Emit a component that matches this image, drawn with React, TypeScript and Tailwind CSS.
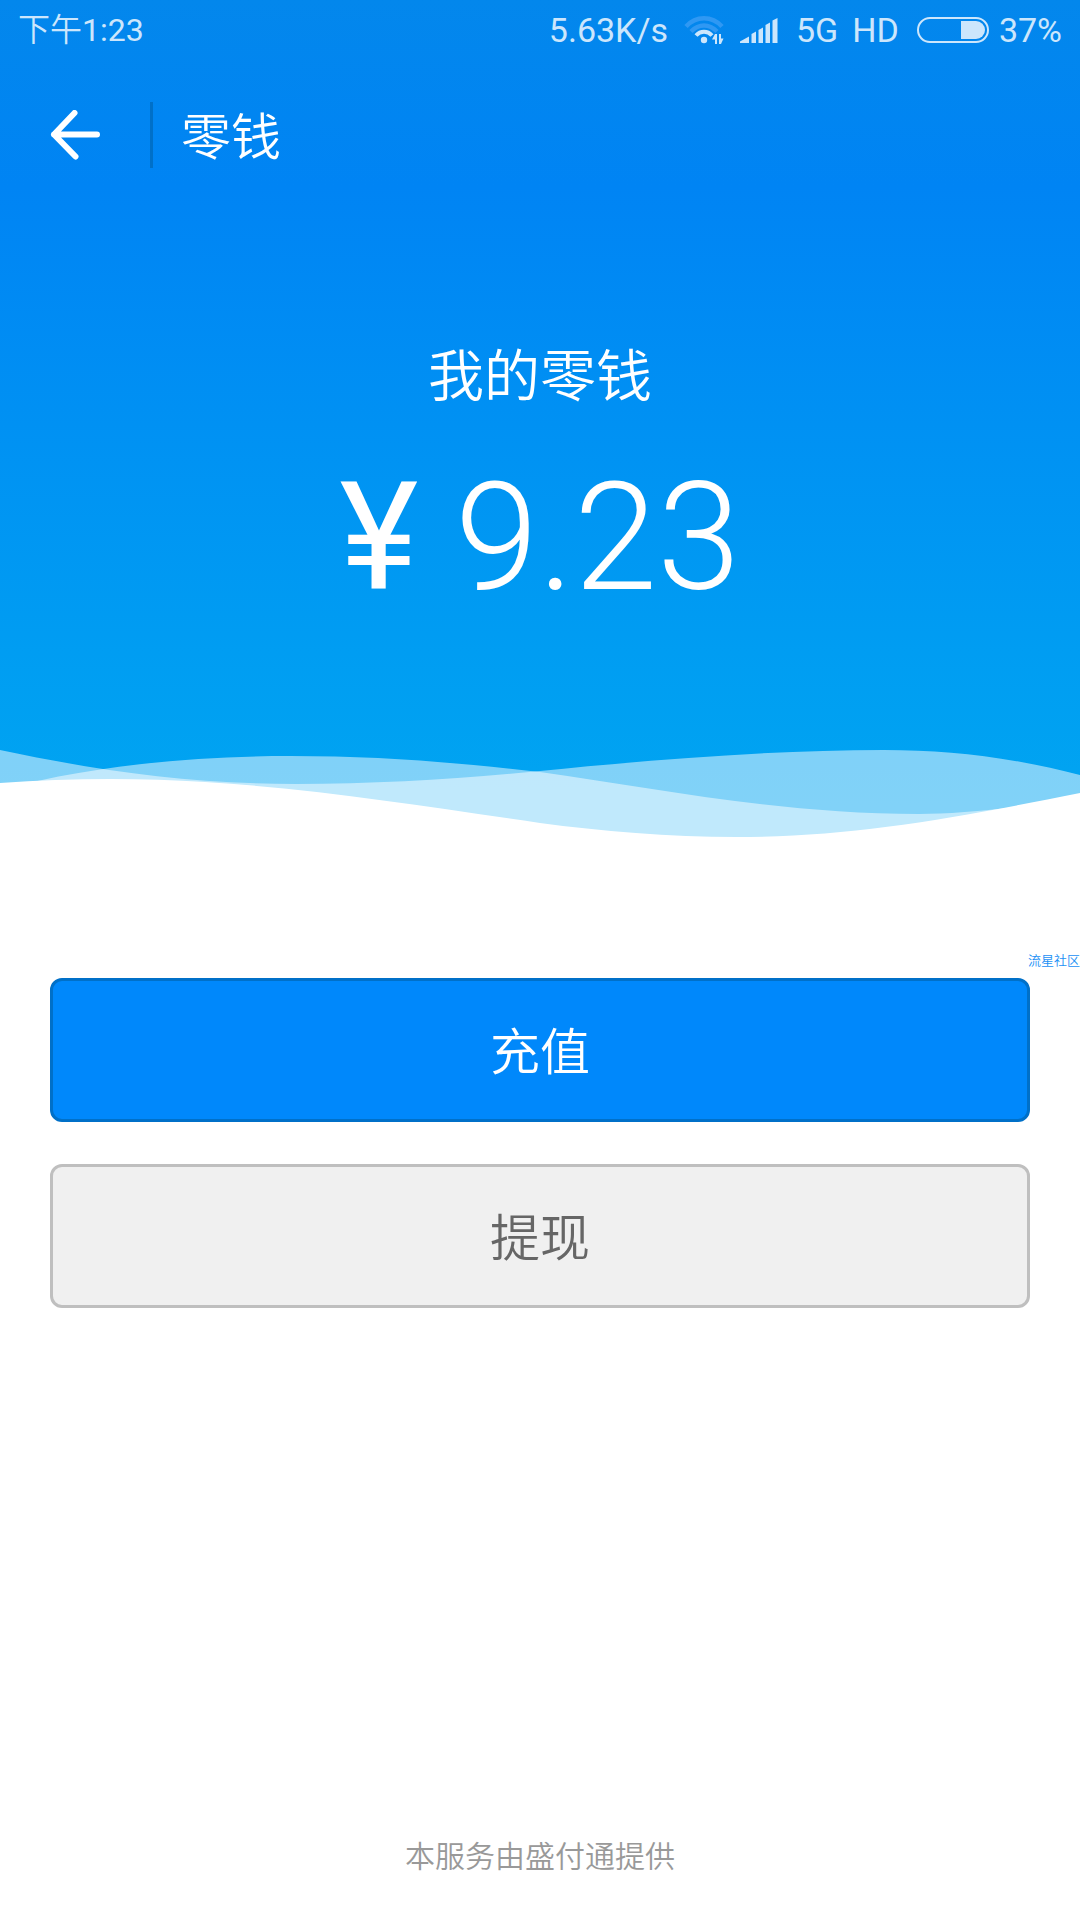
const WifiIcon = () => (
  <svg viewBox="0 0 40 29" className="w-10 h-[29px]" fill="none" aria-hidden="true">
    <path d="M2 10.500C12 -0.500 28 -0.500 38 10.500" stroke="#2f98f3" strokeWidth="4.500" />
    <path d="M7 15.500C15 7.500 25 7.500 33 15.500" stroke="#2f98f3" strokeWidth="4.500" />
    <path d="M12 19.500C16.500 14.500 23.500 14.500 28 19.500" stroke="#cce6fc" strokeWidth="4" />
    <circle cx="20" cy="24" r="3.200" fill="#cce6fc" />
    <path d="M28 23.500L31 18H33V28H31V23.500ZM39.500 22.500L37 28H35V18H37V22.500Z" fill="#cce6fc" />
  </svg>
);

const SignalIcon = () => (
  <svg viewBox="0 0 38 25" className="w-[38px] h-[25px]" fill="#cce6fc" aria-hidden="true">
    <path d="M0 25V23.500L9 18.500V25Z" />
    <path d="M11.500 25V16L16 13.500V25Z" />
    <path d="M18.500 25V12L23 9.500V25Z" />
    <path d="M25.500 25V7L30 4.500V25Z" />
    <path d="M32.500 25V2.500L37.500 0V25Z" />
  </svg>
);

const BatteryIcon = () => (
  <svg viewBox="0 0 72 26" className="w-[72px] h-[26px]" fill="none" aria-hidden="true">
    <rect x="1" y="1" width="70" height="24" rx="12" stroke="#cce6fc" strokeWidth="2" />
    <path d="M44 4H59A9 9 0 0 1 59 22H44Z" fill="#cce6fc" />
  </svg>
);

const BackIcon = () => (
  <svg
    viewBox="0 0 50 50"
    className="w-[50px] h-[50px]"
    fill="none"
    stroke="white"
    strokeWidth="6"
    strokeLinecap="round"
    strokeLinejoin="round"
    aria-hidden="true"
  >
    <path d="M24.500 3L4 24.500L25.500 46.500M4 24.500H47" />
  </svg>
);

const Waves = () => (
  <svg
    viewBox="0 750 1080 100"
    preserveAspectRatio="none"
    className="block w-full h-[100px]"
    fill="white"
    aria-hidden="true"
  >
    <path
      fillOpacity="0.5"
      d="M0 750C100 771 190 784 296 784C380 784 460 779 540 771C650 760 770 750 884 750C950 750 1010 757 1080 775V850H0Z"
    />
    <path
      fillOpacity="0.5"
      d="M0 790C90 766 190 756 290 756C380 756 450 762 540 772C660 789 780 814 919 814C960 814 1030 807 1080 797V850H0Z"
    />
    <path d="M0 783C70 778 140 778 205 782C320 789 430 807 540 823C600 831 670 837 736 837C850 837 950 819 1080 793V850H0Z" />
  </svg>
);

const StatusBar = () => (
  <div
    className="h-[60px] px-[18px] flex items-center text-[34px] leading-[60px] text-[#cce6fc]
    font-normal font-[Roboto,'Noto_Sans_CJK_SC',sans-serif]"
  >
    <span className="text-[32px]">
      <span className="font-[350]">下午</span>1:23
    </span>
    <div className="ml-auto flex items-center">
      <span className="mr-4">5.63K/s</span>
      <WifiIcon />
      <span className="w-4" />
      <SignalIcon />
      <span className="ml-[18px]">5G</span>
      <span className="ml-[14px] mr-[18px]">HD</span>
      <BatteryIcon />
      <span className="ml-[10px]">37%</span>
    </div>
  </div>
);

const actions = [
  { label: "充值", style: "bg-[#0088fb] border-[#0070c8] text-white" },
  { label: "提现", style: "bg-[#f0f0f0] border-[#bfbfbf] text-[#666666]" },
];

const App = () => {
  return (
    <div
      className="min-h-screen flex flex-col bg-white font-[350]
      font-['Noto_Sans_CJK_SC',sans-serif]"
    >
      <section className="flex flex-col bg-linear-to-b from-[#0387ec] via-[#0084f4] via-22% to-[#02a5f1] to-95% text-white">
        <StatusBar />
        <header className="h-[150px] pl-[50px] flex items-center">
          <button type="button" aria-label="返回">
            <BackIcon />
          </button>
          <span className="w-[3px] h-[66px] ml-[50px] mr-7 bg-[#0070c8]" />
          <h1 className="pb-1 text-[50px] leading-[60px]">零钱</h1>
        </header>
        <div className="h-[540px] pt-[120px] flex flex-col items-center">
          <p className="text-[56px] leading-[84px]">我的零钱</p>
          <p className="mt-[34px] text-[150px] leading-[180px] font-light font-[Roboto,sans-serif]">
            <span className="font-normal">¥</span> 9.23
          </p>
        </div>
        <Waves />
      </section>
      <main className="flex-1 pt-[100px]">
        <p className="text-right text-[13px] leading-[20px] text-[#1a90f5]">流星社区</p>
        <div className="mt-2 px-[50px] flex flex-col gap-[42px]">
          {actions.map((action) => (
            <button
              key={action.label}
              type="button"
              className={`h-36 pb-1 border-3 rounded-xl text-[50px] ${action.style}`}
            >
              {action.label}
            </button>
          ))}
        </div>
      </main>
      <footer className="pb-[42px] text-center text-[30px] leading-[48px] text-[#999999]">
        本服务由盛付通提供
      </footer>
    </div>
  );
};

export default App;
